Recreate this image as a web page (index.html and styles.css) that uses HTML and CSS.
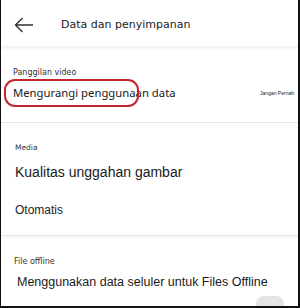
FILE: index.html
```html
<!DOCTYPE html>
<html>
<head>
<meta charset="utf-8">
<link rel="stylesheet" href="styles.css">
</head>
<body>
<div class="frame">
  <header class="topbar">
    <svg class="back" width="20" height="16" viewBox="0 0 20 16"><path d="M19 8H1.5M8.5 1L1.5 8l7 7" fill="none" stroke="#333" stroke-width="1.4"/></svg>
    <span class="title">Data dan penyimpanan</span>
  </header>
  <section class="sec sec1">
    <div class="label">Panggilan video</div>
    <div class="row">
      <span class="item main">Mengurangi penggunaan data</span>
      <span class="tiny">Jangan Pernah</span>
    </div>
    <div class="mark"></div>
  </section>
  <section class="sec sec2">
    <div class="label small">Media</div>
    <div class="item big">Kualitas unggahan gambar</div>
    <div class="value">Otomatis</div>
  </section>
  <section class="sec sec3">
    <div class="label">File offline</div>
    <div class="item arial">Menggunakan data seluler untuk Files Offline</div>
    <div class="toggle"></div>
  </section>
</div>
</body>
</html>
```
FILE: styles.css
```css
html, body { margin: 0; padding: 0; background: #fff; }
body { width: 300px; height: 308px; overflow: hidden; font-family: "Liberation Sans", Arial, sans-serif; color: #222; }
.frame { box-sizing: border-box; width: 300px; height: 308px; border-left: 1px solid #111; border-right: 2px solid #111; border-bottom: 2px solid #111; position: relative; overflow: hidden; }
.topbar { height: 46px; display: flex; align-items: center; padding-left: 13px; box-shadow: 0 2px 3px rgba(0,0,0,0.06); border-bottom: 1px solid #f0f0f0; }
.back { margin-top: 4px; }
.title { font-family: "DejaVu Sans", sans-serif; font-size: 11px; margin-left: 27px; margin-top: 3px; color: #222; }
.sec { border-bottom: 1px solid #e6e6e6; }
.sec1 { padding: 21px 0 10px 12px; height: 44px; position: relative; }
.label { font-family: "DejaVu Sans", sans-serif; font-size: 8px; color: #333; }
.row { display: flex; justify-content: space-between; align-items: center; margin-top: 8px; padding-right: 4px; }
.item { font-size: 13px; color: #1a1a1a; }
.main { font-family: "Noto Sans", sans-serif; font-size: 11.3px; }
.mark { position: absolute; left: 3px; top: 32px; width: 131px; height: 24px; border: 2px solid #c1272d; border-radius: 11px; }
.tiny { font-size: 5px; color: #222; }
.sec2 { padding: 20px 0 14px 14px; height: 78px; box-shadow: 0 2px 2px rgba(0,0,0,0.04); }
.small { font-size: 7.5px; }
.big { font-size: 14px; margin-top: 12px; }
.value { font-size: 12px; margin-top: 23px; }
.sec3 { padding: 21px 0 0 13px; border-bottom: none; position: relative; height: 60px; }
.arial { font-size: 12.5px; margin-top: 9px; margin-left: 3px; }
.toggle { position: absolute; left: 255px; top: 60px; width: 28px; height: 16px; border-radius: 8px; background: #e4e4e4; }
```
